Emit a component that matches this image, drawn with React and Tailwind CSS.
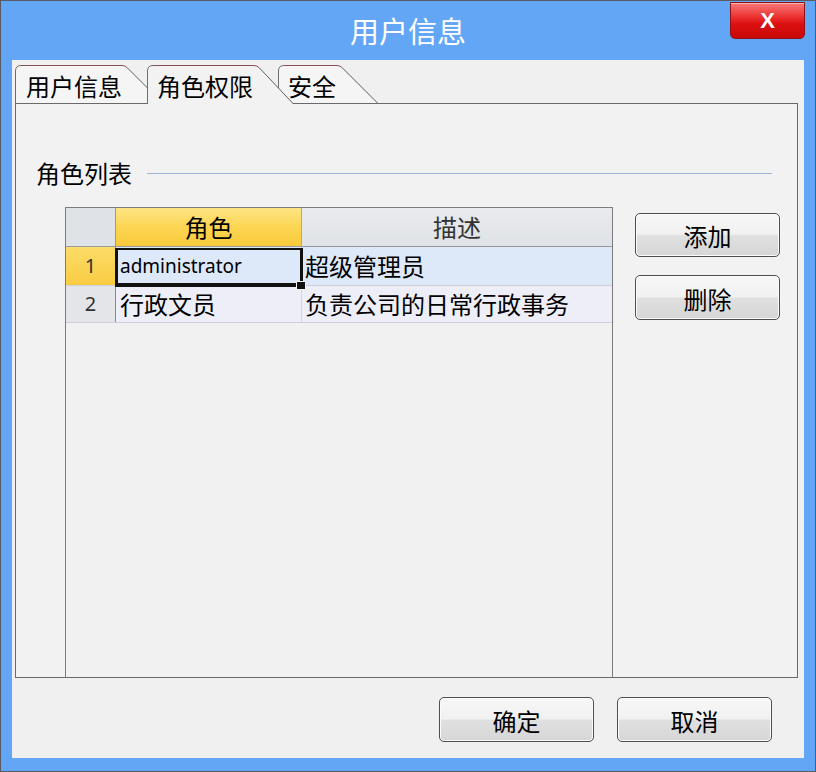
import React from "react";

const CJK = "font-['Noto_Sans_CJK_SC','Noto_Sans',sans-serif]";

function Tab({ label, body, slant, selected, className = "", pl = 10 }) {
  const w = body + slant;
  const fillPath = `M0.5,${selected ? 40 : 39} L0.5,7 Q0.5,1.5 6,1.5 L${body - 3},1.5 Q${body},1.5 ${body + 2.5},4 L${w - 0.5},${selected ? 40 : 39} Z`;
  const sidePath = `M0.5,${selected ? 40 : 39} L0.5,7 Q0.5,1.5 6,1.5`;
  const topPath = `M6,1.5 L${body - 3},1.5 Q${body},1.5 ${body + 2.5},4`;
  const slantPath = `M${body + 2.5},4 L${w - 0.5},${selected ? 40 : 39}`;
  return (
    <div
      className={`relative h-[39px] shrink-0 ${selected ? "z-20" : "z-10"} ${className}`}
      style={{ width: w }}
    >
      <svg
        className="absolute left-0 top-0 overflow-visible"
        width={w}
        height={40}
        viewBox={`0 0 ${w} 40`}
      >
        <path d={fillPath} fill={selected ? "#f2f2f2" : "#f5f5f5"} />
        <path d={sidePath} fill="none" stroke="#6e6e6e" strokeWidth="1" />
        <path d={topPath} fill="none" stroke="#8a5050" strokeWidth="1" />
        <path d={slantPath} fill="none" stroke="#5e5e5e" strokeWidth="1" />
      </svg>
      <div
        className={`relative ${CJK} text-[24px] leading-[28px] pt-[8px] text-black`}
        style={{ paddingLeft: pl }}
      >
        {label}
      </div>
    </div>
  );
}

function Button({ children, className = "" }) {
  return (
    <div
      className={`flex items-center justify-center rounded-[5px] border border-[#4e4e4e] bg-[linear-gradient(to_bottom,#f7f7f7_0%,#f1f1f1_48%,#e0e0e0_52%,#d6d6d6_100%)] shadow-[inset_0_0_0_1px_#fbfbfb] ${CJK} text-[24px] leading-none text-black pt-[2px] ${className}`}
    >
      {children}
    </div>
  );
}

export default function App() {
  return (
    <div className="w-[816px] h-[772px] border border-[#585c62] bg-[#63a6f5] flex flex-col overflow-hidden">
      {/* Title bar */}
      <div className="relative h-[59px] flex items-center justify-center shrink-0">
        <span className={`${CJK} text-[29px] text-white leading-none`}>用户信息</span>
        <div className="absolute right-[10px] top-[1px] w-[75px] h-[37px] rounded-b-[5px] border border-[#8c1414] bg-[linear-gradient(to_bottom,#f57a7a_0%,#ec3030_40%,#dc1010_60%,#c80808_100%)] shadow-[inset_0_1px_0_#ffb0b0] flex items-center justify-center">
          <span className="font-['Liberation_Sans',sans-serif] font-bold text-[22px] leading-none text-white">X</span>
        </div>
      </div>

      {/* Client area */}
      <div className="ml-[11px] w-[792px] h-[698px] bg-[#f0f0f0] flex flex-col shrink-0">
        {/* Tabs */}
        <div className="pt-[4px] pl-[3px] flex h-[43px] shrink-0">
          <Tab label="用户信息" body={110} slant={38} pl={11} />
          <Tab label="角色权限" body={110} slant={37} selected className="-ml-[16px]" />
          <Tab label="安全" body={62} slant={38} className="-ml-[16px]" />
        </div>

        {/* Panel */}
        <div className="ml-[3px] w-[783px] h-[575px] border border-[#6a6a6a] bg-[#f2f2f2] flex flex-col shrink-0">
          {/* Group label */}
          <div className="mt-[54px] h-[30px] flex items-center pl-[20px] pr-[25px]">
            <span className={`${CJK} text-[24px] leading-[30px] text-black`}>角色列表</span>
            <div className="ml-[15px] flex-1 h-px bg-[#9db3d8]" />
          </div>

          {/* Grid + side buttons */}
          <div className="mt-[19px] flex-1 flex">
            {/* Grid */}
            <div className="ml-[49px] w-[548px] border-l border-t border-r border-[#7c7c7c] bg-[#f1f1f1] flex flex-col">
              {/* Header */}
              <div className="flex h-[39px] border-b border-[#9a9a9a]">
                <div className="w-[50px] border-r border-[#9a9a9a] bg-[#dfe2e6]" />
                <div className={`w-[186px] border-r border-[#d9a830] bg-[linear-gradient(to_bottom,#fde585_0%,#fcd552_50%,#f9cb3c_100%)] flex items-center justify-center ${CJK} text-[24px] leading-none text-black`}>
                  角色
                </div>
                <div className={`flex-1 bg-[linear-gradient(to_bottom,#e9ebee_0%,#dfe2e6_100%)] flex items-center justify-center ${CJK} text-[24px] leading-none text-[#333]`}>
                  描述
                </div>
              </div>
              {/* Row 1 */}
              <div className="flex h-[39px] border-b border-[#cfcfdc]">
                <div className="w-[50px] border-r border-[#8a8a8a] bg-[linear-gradient(to_bottom,#fcdc68_0%,#f9cc42_100%)] flex items-center justify-center font-['Noto_Sans',sans-serif] text-[20px] text-[#333]">
                  1
                </div>
                <div className="relative w-[186px] border-r border-[#cfd6e4] bg-[#dde8f9] flex items-center pl-[4px] font-['Noto_Sans',sans-serif] text-[19px] text-black">
                  administrator
                  <div className="absolute left-[-1px] top-[1px] right-[-2px] bottom-[-2px] border-l-[3px] border-t-2 border-r-[3px] border-b-[4px] border-[#111]" />
                  <div className="absolute right-[-5px] bottom-[-5px] w-[10px] h-[9px] bg-[#111] border border-[#f2f2f2]" />
                </div>
                <div className={`flex-1 bg-[#dde8f9] flex items-center pl-[3px] ${CJK} text-[24px] text-black`}>
                  超级管理员
                </div>
              </div>
              {/* Row 2 */}
              <div className="flex h-[37px] border-b border-[#cfcfdc]">
                <div className="w-[50px] border-r border-[#8a8a8a] bg-[#e3e5e9] flex items-center justify-center font-['Noto_Sans',sans-serif] text-[20px] text-[#333]">
                  2
                </div>
                <div className={`w-[186px] border-r border-[#d4d4e0] bg-[#eeeef8] flex items-center pl-[4px] ${CJK} text-[24px] text-black`}>
                  行政文员
                </div>
                <div className={`flex-1 bg-[#eeeef8] flex items-center pl-[3px] ${CJK} text-[24px] text-black`}>
                  负责公司的日常行政事务
                </div>
              </div>
              <div className="flex-1" />
            </div>

            {/* Side buttons */}
            <div className="ml-[22px] mt-[6px] flex flex-col gap-[18px]">
              <Button className="w-[145px] h-[44px]">添加</Button>
              <Button className="w-[145px] h-[45px]">删除</Button>
            </div>
          </div>
        </div>

        {/* Bottom buttons */}
        <div className="pt-[19px] flex justify-end gap-[23px] pr-[32px]">
          <Button className="w-[155px] h-[45px]">确定</Button>
          <Button className="w-[155px] h-[45px]">取消</Button>
        </div>
      </div>
    </div>
  );
}
